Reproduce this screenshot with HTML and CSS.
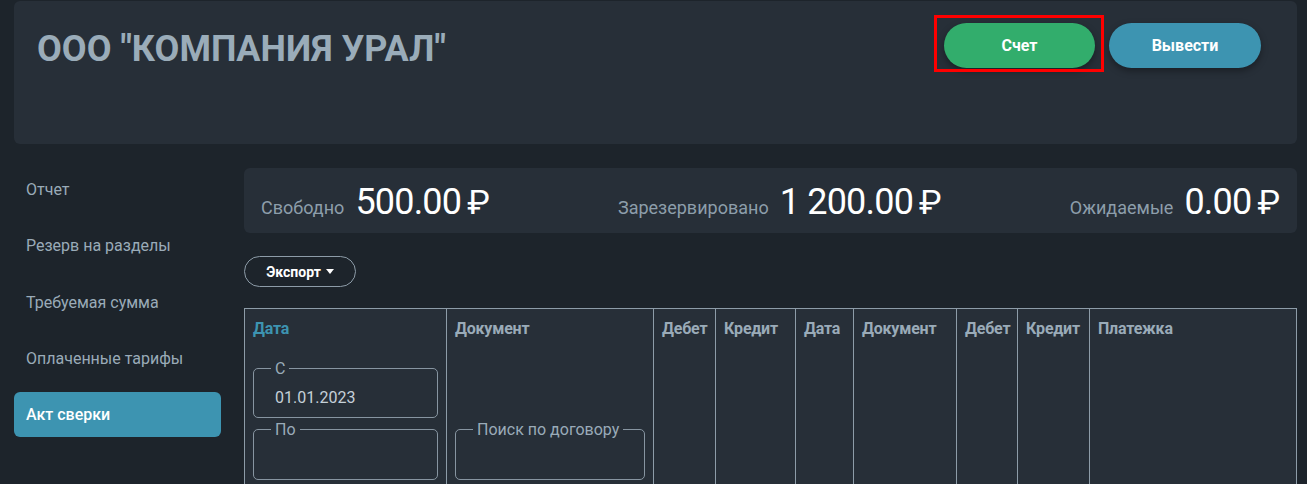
FILE: index.html
```html
<!DOCTYPE html>
<html lang="ru">
<head>
<meta charset="utf-8">
<title>Акт сверки</title>
<link rel="stylesheet" href="styles.css">
</head>
<body>
<div class="page">
  <header class="header">
    <h1 class="title">ООО "КОМПАНИЯ УРАЛ"</h1>
    <div class="actions">
      <span class="highlight">
        <button class="btn btn-green">Счет</button>
        <span class="highlight-frame"></span>
      </span>
      <button class="btn btn-blue">Вывести</button>
    </div>
  </header>

  <div class="content">
    <nav class="sidebar">
      <div class="nav-item">Отчет</div>
      <div class="nav-item">Резерв на разделы</div>
      <div class="nav-item">Требуемая сумма</div>
      <div class="nav-item">Оплаченные тарифы</div>
      <div class="nav-item active">Акт сверки</div>
    </nav>

    <main class="main">
      <section class="summary">
        <div class="stat"><span class="stat-label">Свободно</span><span class="stat-value">500.00</span><span class="rub">₽</span></div>
        <div class="stat"><span class="stat-label">Зарезервировано</span><span class="stat-value">1 200.00</span><span class="rub">₽</span></div>
        <div class="stat"><span class="stat-label">Ожидаемые</span><span class="stat-value">0.00</span><span class="rub">₽</span></div>
      </section>

      <button class="export">Экспорт<span class="caret"></span></button>

      <div class="table">
        <div class="cell">
          <div class="th th-active">Дата</div>
          <fieldset class="field field-first">
            <legend>С</legend>
            <div class="field-value">01.01.2023</div>
          </fieldset>
          <fieldset class="field field-second">
            <legend>По</legend>
            <div class="field-empty"></div>
          </fieldset>
        </div>
        <div class="cell">
          <div class="th">Документ</div>
          <fieldset class="field field-bottom">
            <legend>Поиск по договору</legend>
            <div class="field-empty"></div>
          </fieldset>
        </div>
        <div class="cell"><div class="th">Дебет</div></div>
        <div class="cell"><div class="th">Кредит</div></div>
        <div class="cell"><div class="th">Дата</div></div>
        <div class="cell"><div class="th">Документ</div></div>
        <div class="cell"><div class="th">Дебет</div></div>
        <div class="cell"><div class="th">Кредит</div></div>
        <div class="cell"><div class="th">Платежка</div></div>
      </div>
    </main>
  </div>
</div>
</body>
</html>
```

FILE: styles.css
```css
* { box-sizing: border-box; }

html, body {
  margin: 0;
  background: #1d242b;
  font-family: Roboto, "Noto Sans", sans-serif;
  overflow: hidden;
}

.page {
  padding: 1px 10px 0 14px;
}

.header {
  height: 143px;
  background: #272f38;
  border-radius: 6px;
  display: flex;
  justify-content: space-between;
  align-items: flex-start;
  padding: 22px 36px 0 23px;
}

.title {
  margin: 5px 0 0;
  font-family: Roboto, "Liberation Sans", sans-serif;
  font-weight: 700;
  font-size: 36px;
  line-height: normal;
  color: #9aacb9;
}

.actions {
  display: flex;
  gap: 14px;
}

.highlight {
  position: relative;
  display: flex;
}

.highlight-frame {
  position: absolute;
  left: -10px;
  right: -9px;
  top: -8px;
  bottom: -4px;
  border: 3px solid #ff0000;
  pointer-events: none;
}

.btn {
  height: 45px;
  border: none;
  border-radius: 23px;
  font-family: Roboto, sans-serif;
  font-weight: 700;
  font-size: 16px;
  color: #ffffff;
  box-shadow: 0 3px 7px rgba(0, 0, 0, 0.35);
  padding: 0;
}

.btn-green {
  width: 151px;
  background: #32ad6c;
}

.btn-blue {
  width: 152px;
  background: #3d94b1;
}

.content {
  display: flex;
  gap: 23px;
  margin-top: 23px;
}

.sidebar {
  width: 207px;
  flex: none;
  display: flex;
  flex-direction: column;
  gap: 11.25px;
}

.nav-item {
  height: 45px;
  display: flex;
  align-items: center;
  padding: 0 12px;
  border-radius: 6px;
  font-size: 16px;
  color: #9aabb8;
}

.nav-item.active {
  background: #3d94b1;
  color: #ffffff;
  font-weight: 500;
}

.main {
  flex: 1;
  min-width: 0;
}

.summary {
  margin-top: 1px;
  height: 65px;
  background: #272f38;
  border-radius: 6px;
  display: flex;
  justify-content: space-between;
  align-items: center;
  padding: 2px 17px 0;
}

.stat {
  display: flex;
  align-items: baseline;
}

.stat-label {
  font-size: 18px;
  color: #8d9eab;
  margin-right: 11px;
}

.stat-value {
  font-size: 36px;
  color: #ffffff;
  letter-spacing: -0.8px;
}

.rub {
  font-size: 34px;
  color: #ffffff;
  margin-left: 6px;
}

.export {
  margin-top: 23px;
  display: flex;
  align-items: center;
  justify-content: center;
  width: 112px;
  height: 31px;
  border: 1px solid #8d9ca8;
  border-radius: 16px;
  background: transparent;
  color: #ffffff;
  font-family: Roboto, sans-serif;
  font-weight: 700;
  font-size: 14px;
  padding: 0;
}

.caret {
  display: inline-block;
  margin-left: 5px;
  width: 0;
  height: 0;
  border-left: 4px solid transparent;
  border-right: 4px solid transparent;
  border-top: 5px solid #ffffff;
}

.table {
  margin-top: 21px;
  display: grid;
  grid-template-columns: 202px 207px 62px 80px 58px 103px 61px 72px 1fr;
  background: #272f38;
  border-top: 1px solid #8d9ca8;
  border-right: 1px solid #8d9ca8;
}

.cell {
  border-left: 1px solid #8d9ca8;
  padding: 10px 8px 10px;
  display: flex;
  flex-direction: column;
}

.th {
  font-size: 16px;
  font-weight: 700;
  color: #9aabb8;
  line-height: 19px;
  letter-spacing: -0.2px;
}

.th-active {
  color: #3d94b1;
}

.field {
  margin: 0;
  padding: 0 16px 0 17px;
  border: 1px solid #8795a1;
  border-radius: 5px;
  min-width: 0;
}

.field legend {
  padding: 0 4px;
  font-size: 16px;
  line-height: 19px;
  color: #9aabb8;
}

.field-first {
  margin-top: 21px;
}

.field-second {
  margin-top: 2px;
}

.field-bottom {
  margin-top: auto;
}

.field-value {
  padding: 10px 4px 10px;
  font-size: 16px;
  line-height: 19px;
  color: #c5d0d8;
}

.field-empty {
  height: 40px;
}
```
